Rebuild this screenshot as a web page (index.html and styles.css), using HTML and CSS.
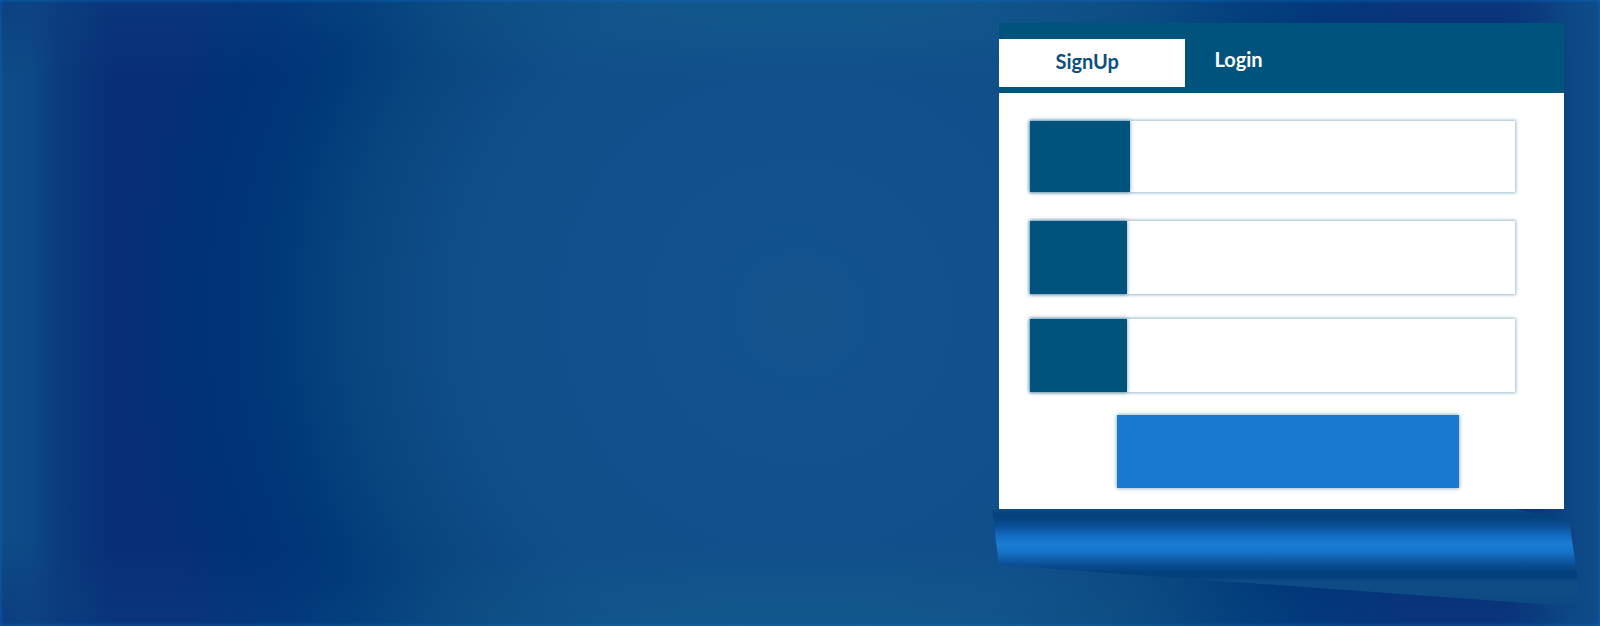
FILE: index.html
```html
<!DOCTYPE html>
<html lang="en">
<head>
<meta charset="utf-8">
<meta name="viewport" content="width=device-width, initial-scale=1">
<title>SignUp</title>
<link rel="stylesheet" href="styles.css">
</head>
<body>
<main class="page">
  <section class="panel">
    <nav class="tabs">
      <a class="tab tab-active" href="#signup">SignUp</a>
      <a class="tab" href="#login">Login</a>
    </nav>
    <form class="form" id="signup">
      <div class="field field-first">
        <label class="field-icon" for="name"></label>
        <input class="field-input" id="name" type="text" aria-label="Name">
      </div>
      <div class="field">
        <label class="field-icon" for="email"></label>
        <input class="field-input" id="email" type="email" aria-label="Email">
      </div>
      <div class="field">
        <label class="field-icon" for="password"></label>
        <input class="field-input" id="password" type="password" aria-label="Password">
      </div>
      <button class="submit" type="submit" aria-label="Submit"></button>
    </form>
    <div class="fold"></div>
  </section>
</main>
</body>
</html>
```
FILE: styles.css
```css
* { box-sizing: border-box; }

body {
  margin: 0;
  font-family: Lato, "Open Sans", sans-serif;
}

.page {
  display: flex;
  justify-content: flex-end;
  align-items: flex-start;
  min-height: 100vh;
  padding: 23px 36px 18px 16px;
  overflow: hidden;
  box-shadow: inset 0 0 4px rgba(14, 110, 200, .8);
  background:
    radial-gradient(circle at 0 0, rgba(10, 48, 118, .4), rgba(10, 48, 118, 0) 80px),
    radial-gradient(circle at 0 100%, rgba(10, 48, 118, .5), rgba(10, 48, 118, 0) 90px),
    linear-gradient(90deg, #0e4c88 0, rgba(14, 76, 136, .9) 30px, rgba(14, 76, 136, .4) 60px, rgba(14, 76, 136, 0) 110px),
    linear-gradient(270deg, #0e4c88 0, rgba(14, 76, 136, .8) 30px, rgba(14, 76, 136, .2) 70px, rgba(14, 76, 136, 0) 100px),
    radial-gradient(ellipse 560px 80px at 50% 0, rgba(20, 100, 140, .4) 0, rgba(20, 100, 140, .28) 40%, rgba(20, 100, 140, 0) 100%),
    radial-gradient(ellipse 560px 80px at 50% 100%, rgba(20, 100, 140, .4) 0, rgba(20, 100, 140, .28) 40%, rgba(20, 100, 140, 0) 100%),
    linear-gradient(180deg, rgba(20, 84, 144, .18) 0, rgba(20, 84, 144, 0) 80px),
    linear-gradient(0deg, rgba(20, 84, 144, .18) 0, rgba(20, 84, 144, 0) 80px),
    radial-gradient(circle at 50% 50%, #15538a 0, #12528e 60px, #104e8a 340px, #09467f 440px, #003878 530px, #003277 600px, #082f76 680px, #082f76 100%);
}

.panel {
  width: 36%;
  min-width: 565px;
}

.tabs {
  display: flex;
  height: 70px;
  padding-top: 16px;
  background: #00537c;
}

.tab {
  height: 48px;
  padding: 0 29px;
  color: #fff;
  font-size: 20px;
  font-weight: 700;
  line-height: 40px;
  text-decoration: none;
}

.tab-active {
  width: 33%;
  padding: 0 10px 0 0;
  background: #fff;
  color: #0c4f7f;
  line-height: 44px;
  text-align: center;
}

.form {
  display: flex;
  flex-direction: column;
  gap: 25px;
  padding: 28px 49px 21px 31px;
  background: #fff;
}

.field {
  display: flex;
  height: 73px;
  box-shadow: 0 0 3px 1px rgba(0, 83, 124, .4);
}

.field-first {
  height: 71px;
  margin-bottom: 4px;
}

.field:nth-child(3) { margin-bottom: -2px; }

.field-icon {
  position: relative;
  width: 97px;
  background: #00537c;
  box-shadow: 0 0 4px rgba(0, 83, 124, .6);
}

.field-first .field-icon { width: 100px; }

.field-input {
  flex: 1;
  min-width: 0;
  border: 0;
  padding: 0 16px;
  background: #fff;
  font: inherit;
  font-size: 20px;
}

.submit {
  width: 342px;
  height: 73px;
  margin-left: 87px;
  border: 0;
  background: #1978cf;
  box-shadow: 0 0 4px rgba(0, 83, 124, .6);
}

.fold {
  height: 98px;
  margin: 0 -18px 0 -7px;
  background: linear-gradient(180deg, #0c4b86 0, #05427d 5px, #05427d 9px, #0b529a 18px, #1570c6 28px, #1b7cd4 36px, #1672c8 43px, #0b5197 55px, #04407b 63px, #04407b 68px, #0f4c86 72px, #0f4c86 84px, #0b4881 98px);
  clip-path: polygon(0 0, 523px 0, calc(100% - 13px) 11px, 100% 100%, 7px 56px);
}
```
